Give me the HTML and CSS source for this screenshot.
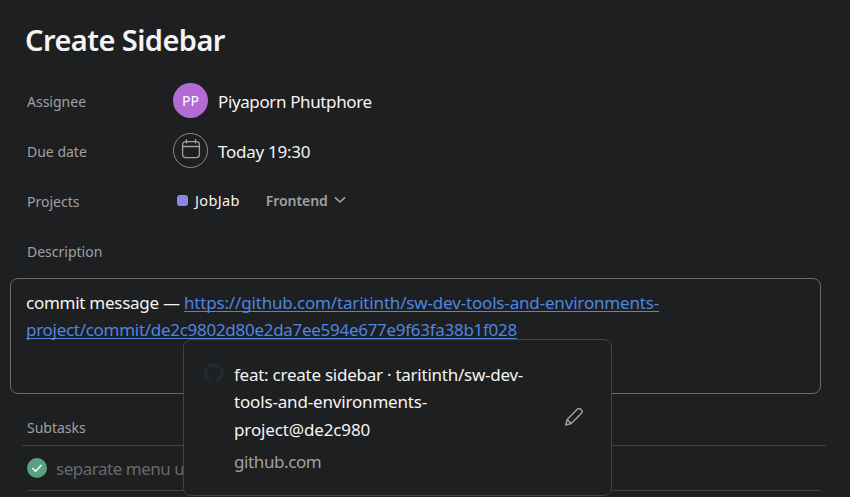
FILE: index.html
```html
<!DOCTYPE html>
<html lang="en">
<head>
<meta charset="utf-8">
<title>Create Sidebar</title>
<link rel="stylesheet" href="styles.css">
</head>
<body>
<main class="task">
  <h1 class="title">Create Sidebar</h1>
  <dl class="fields">
    <div class="field">
      <dt class="label">Assignee</dt>
      <dd class="value"><span class="avatar">PP</span><span class="name">Piyaporn Phutphore</span></dd>
    </div>
    <div class="field">
      <dt class="label">Due date</dt>
      <dd class="value">
        <span class="date-icon"><svg width="20" height="20" viewBox="0 0 20 20" fill="none" stroke="#a2a0a2" stroke-width="1.3"><rect x="1.6" y="2.6" width="16.8" height="16" rx="3"/><path d="M1.6 7.500h16.8M5.500 .6v3.500M14.500 .6v3.500" stroke-linecap="round"/></svg></span>
        <span class="due">Today 19:30</span>
      </dd>
    </div>
    <div class="field">
      <dt class="label">Projects</dt>
      <dd class="value projects"><i class="dot"></i><span class="project">JobJab</span><span class="section">Frontend</span><svg width="12" height="8" viewBox="0 0 12 8" fill="none" stroke="#a2a0a2" stroke-width="1.7" stroke-linecap="round" stroke-linejoin="round"><path d="M1.500 1.800L6 6l4.500-4.200"/></svg></dd>
    </div>
    <div class="field">
      <dt class="label">Description</dt>
    </div>
  </dl>
  <section class="description">
    <p><span class="commit">commit message — </span><a href="#"><span class="link1">https://github.com/taritinth/sw-dev-tools-and-environments-</span><br><span class="link2">project/commit/de2c9802d80e2da7ee594e677e9f63fa38b1f028</span></a></p>
    <aside class="preview">
      <svg class="github" width="20" height="20" viewBox="0 0 16 16" fill="#22292f"><path d="M8 0C3.580 0 0 3.580 0 8c0 3.540 2.290 6.530 5.470 7.590.4.070.550-.170.550-.380 0-.190-.010-.820-.010-1.490-2.010.370-2.530-.490-2.690-.940-.090-.230-.480-.940-.820-1.130-.280-.150-.680-.520-.010-.530.630-.010 1.080.580 1.230.820.720 1.210 1.870.870 2.330.660.070-.520.280-.870.510-1.070-1.780-.2-3.640-.890-3.640-3.950 0-.870.310-1.590.820-2.150-.080-.2-.360-1.020.080-2.120 0 0 .670-.210 2.200.820.640-.180 1.320-.270 2-.270s1.360.090 2 .270c1.530-1.040 2.200-.820 2.200-.820.440 1.100.160 1.920.080 2.120.510.560.820 1.270.820 2.150 0 3.070-1.870 3.750-3.650 3.950.290.250.540.730.540 1.480 0 1.070-.010 1.930-.010 2.200 0 .210.150.460.550.380A8.010 8.010 0 0 0 16 8c0-4.420-3.580-8-8-8z"/></svg>
      <div class="preview-text">
        <div class="preview-title"><span class="p1">feat: create sidebar · taritinth/sw-dev-</span><br><span class="p2">tools-and-environments-</span><br><span class="p3">project@de2c980</span></div>
        <div class="host">github.com</div>
      </div>
      <svg class="pencil" width="20" height="20" viewBox="0 0 20 20" fill="none" stroke="#a2a0a2" stroke-width="1.4" stroke-linejoin="round"><path d="M1.800 18l1.400-5.500L13 2.600a2.750 2.750 0 0 1 4.200 4L7.200 16.500zM3.200 12.500L7.200 16.500"/></svg>
    </aside>
  </section>
  <section class="subtasks">
    <h2 class="label">Subtasks</h2>
    <div class="subtask"><svg width="20" height="20" viewBox="0 0 20 20"><circle cx="10" cy="10" r="10" fill="#58a182"/><path d="M5.800 10.500l2.800 2.700 5.400-5.800" fill="none" stroke="#fff" stroke-width="1.5" stroke-linecap="round" stroke-linejoin="round"/></svg><span class="sub">separate menu u</span></div>
  </section>
</main>
</body>
</html>
```
FILE: styles.css
```css
* { box-sizing: border-box; }
body { margin: 0; background: #1e1f21; color: #f5f4f3; font-family: "Noto Sans", "Open Sans", sans-serif; font-size: 17px; overflow: hidden; }
.task { height: 497px; }
.title { margin: 0; padding: 20px 0 0 25px; height: 75px; font-size: 29px; line-height: 40px; font-weight: 600; letter-spacing: -.56px; }
.fields { margin: 0; padding-left: 27px; }
.field { display: flex; align-items: center; height: 50px; }
.label { margin: 0; width: 146px; font-size: 14px; line-height: 20px; font-weight: 400; color: #a2a0a2; }
.field .label { padding-top: 3px; }
.value { margin: 0; display: flex; align-items: center; gap: 10px; }
.avatar, .date-icon { display: flex; align-items: center; justify-content: center; width: 35px; height: 35px; border-radius: 50%; }
.avatar { background: #b36bd4; color: #fff; font-size: 14px; }
.date-icon { border: 1px solid #8b898b; padding-bottom: 2px; }
.name, .due { padding-top: 3px; }
.name { letter-spacing: -.38px; }
.due { letter-spacing: -.27px; }
.projects { gap: 0; padding-left: 4px; font-size: 14px; }
.dot { width: 11px; height: 11px; border-radius: 3px; background: #8d84e8; margin-right: 7px; }
.project { font-size: 14.5px; letter-spacing: .35px; }
.section { margin: 0 6px 0 26px; color: #a2a0a2; font-weight: 600; letter-spacing: -.05px; }
.description { position: relative; margin: 3px 0 0 10px; width: 811px; height: 116px; padding: 10px 15px; border: 1px solid #6a6b6d; border-radius: 8px; line-height: 27px; }
.description p { margin: 0; white-space: nowrap; }
.commit { letter-spacing: -.26px; }
.link1 { letter-spacing: -.17px; }
.link2 { letter-spacing: -.285px; }
a { color: #4f85e0; text-underline-offset: 2px; text-decoration-thickness: 1px; text-decoration-skip-ink: none; }
.preview { position: absolute; z-index: 1; left: 172px; top: 60px; width: 429px; height: 157px; border: 1px solid #424244; border-radius: 8px; background: #1e1f21; display: flex; padding: 21px 27px 0 20px; }
.github { margin-top: 2px; }
.preview-text { margin-left: 10px; flex: 1; white-space: nowrap; }
.preview-title { line-height: 27.4px; }
.p1 { letter-spacing: -.25px; }
.p2 { letter-spacing: -.17px; }
.p3 { letter-spacing: -.13px; }
.host { margin-top: 5px; color: #a2a0a2; letter-spacing: -.4px; }
.pencil { margin-top: 46px; }
.subtasks { padding: 24px 0 0 22px; }
.subtasks .label { width: 804px; height: 28px; padding-left: 5px; border-bottom: 1px solid #424244; }
.subtask { margin-left: 5px; width: 794px; height: 45px; border-bottom: 1px solid #424244; display: flex; align-items: center; gap: 9px; color: #6a696b; letter-spacing: -.48px; }
```
